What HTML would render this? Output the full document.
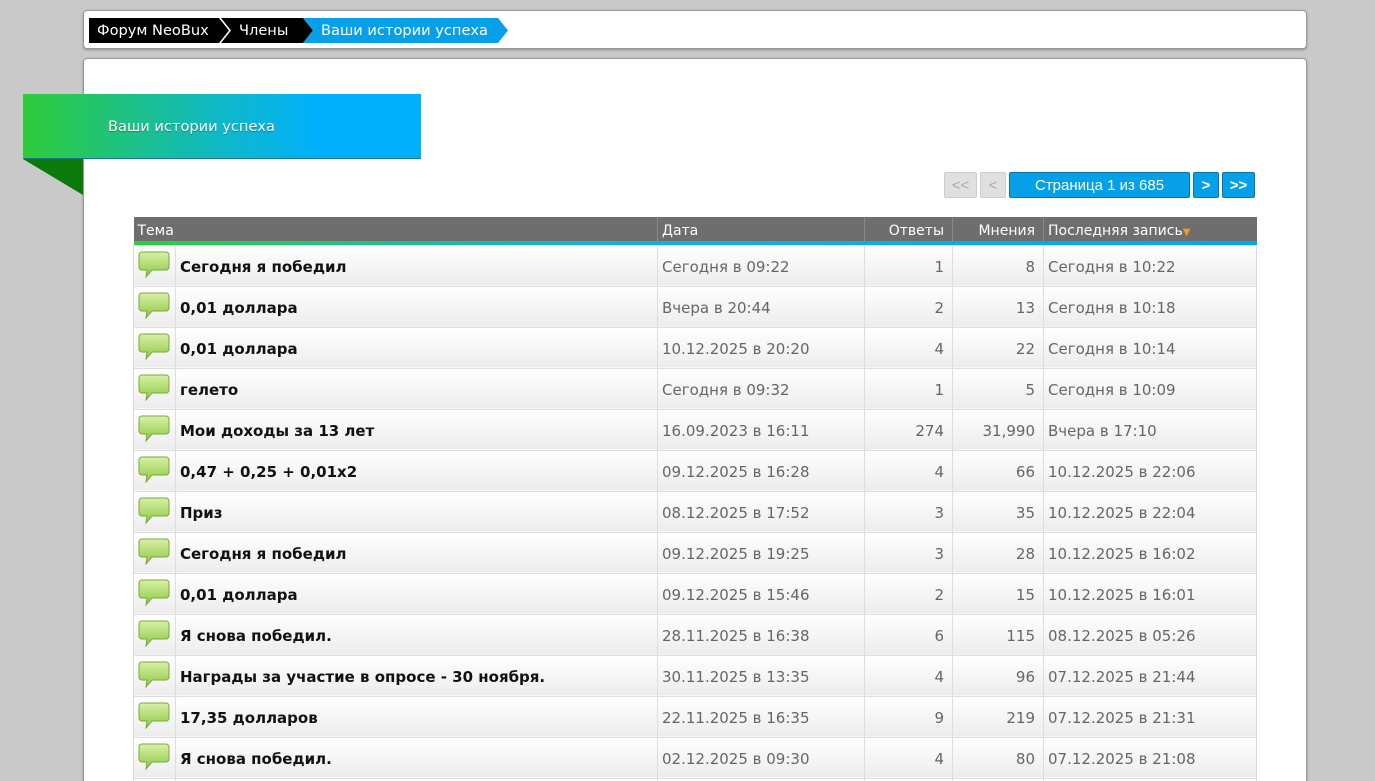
<!DOCTYPE html>
<html><head><meta charset="utf-8"><style>
*{box-sizing:border-box}
html,body{margin:0;width:1375px;height:781px;overflow:hidden}
body{background:#c9c9c9;font-family:"DejaVu Sans","Liberation Sans",sans-serif;position:relative}
.box{position:absolute;left:83px;width:1224px;background:#fff;border:1px solid #999;border-radius:4px;box-shadow:0 1px 2px rgba(0,0,0,.3)}
.bc{position:absolute;top:18px;height:25px;line-height:26px;font-size:14.6px;color:#fff}
.banner{position:absolute;left:23px;top:94px;width:398px;height:65px;background:linear-gradient(90deg,#2ecc38 0%,#0fb8c8 50%,#00b0fc 75%,#00b0fc);border-bottom:1px solid #1a7a8a;color:#fff;font-size:14.6px;line-height:66px;padding-left:85px;text-shadow:0 1px 1px rgba(0,0,0,.3)}
.fold{position:absolute;left:23px;top:159px;width:0;height:0;border-top:36px solid #0a7a0a;border-left:60px solid transparent}
.pg{position:absolute;top:172px;height:26px;border:1px solid #0a74b0;background:#06a0e8;color:#fff;font-size:15px;line-height:25px;text-align:center;border-radius:2px;font-family:"Liberation Sans",sans-serif}
.pg.d{background:#e0e0e0;border-color:#ccc;color:#aaa}
table{position:absolute;left:133px;top:217px;width:1123px;border-collapse:collapse;font-size:15px;table-layout:fixed}
th{background:#6e6e6e;color:#fff;font-weight:normal;height:24px;text-align:left;padding:4px 4px 0;border-left:1px solid #888;font-size:14px}
th.r{text-align:right;padding-right:8px}
tr.bar td{height:4px;padding:0;background:linear-gradient(90deg,#2ecc40,#1ab0d0 40%,#00a8f0);border:0}
td{height:41px;border:1px solid #ddd;background:linear-gradient(#fff,#ececec);color:#666;padding:3px 4px 0;white-space:nowrap;overflow:hidden}
td.t{font-weight:bold;color:#111}
td.n{text-align:right;padding-right:8px}
td.i{padding:0 0 0 4px}
</style></head><body>
<div class="box" style="top:10px;height:39px"></div>
<div class="bc" style="left:89px;width:140px;background:#000;padding-left:8px;clip-path:polygon(0 0,130px 0,140px 50%,130px 100%,0 100%)">Форум NeoBux</div>
<div class="bc" style="left:221px;width:92px;background:#000;padding-left:18px;clip-path:polygon(0 0,82px 0,92px 50%,82px 100%,0 100%,10px 50%)">Члены</div>
<div class="bc" style="left:303px;width:205px;background:#06a0e8;padding-left:18px;clip-path:polygon(0 0,195px 0,205px 50%,195px 100%,0 100%,10px 50%)">Ваши истории успеха</div>
<div class="box" style="top:58px;height:760px"></div>
<div class="fold"></div>
<div class="banner">Ваши истории успеха</div>
<div class="pg d" style="left:944px;width:33px">&lt;&lt;</div>
<div class="pg d" style="left:980px;width:26px">&lt;</div>
<div class="pg" style="left:1009px;width:181px">Страница 1 из 685</div>
<div class="pg" style="left:1193px;width:26px;font-weight:bold">&gt;</div>
<div class="pg" style="left:1222px;width:33px;font-weight:bold">&gt;&gt;</div>
<table>
<colgroup><col style="width:42px"><col style="width:482px"><col style="width:207px"><col style="width:88px"><col style="width:91px"><col style="width:213px"></colgroup>
<tr><th colspan="2" style="border-left:0">Тема</th><th>Дата</th><th class="r">Ответы</th><th class="r">Мнения</th><th>Последняя запись<span style="color:#f39a1e;font-size:10px">▼</span></th></tr>
<tr class="bar"><td colspan="6"></td></tr>
<tbody id="b"></tbody>
</table>
<script>
var rows=[["Сегодня я победил","Сегодня в 09:22",1,8,"Сегодня в 10:22"],["0,01 доллара","Вчера в 20:44",2,13,"Сегодня в 10:18"],["0,01 доллара","10.12.2025 в 20:20",4,22,"Сегодня в 10:14"],["гелето","Сегодня в 09:32",1,5,"Сегодня в 10:09"],["Мои доходы за 13 лет","16.09.2023 в 16:11",274,"31,990","Вчера в 17:10"],["0,47 + 0,25 + 0,01x2","09.12.2025 в 16:28",4,66,"10.12.2025 в 22:06"],["Приз","08.12.2025 в 17:52",3,35,"10.12.2025 в 22:04"],["Сегодня я победил","09.12.2025 в 19:25",3,28,"10.12.2025 в 16:02"],["0,01 доллара","09.12.2025 в 15:46",2,15,"10.12.2025 в 16:01"],["Я снова победил.","28.11.2025 в 16:38",6,115,"08.12.2025 в 05:26"],["Награды за участие в опросе - 30 ноября.","30.11.2025 в 13:35",4,96,"07.12.2025 в 21:44"],["17,35 долларов","22.11.2025 в 16:35",9,219,"07.12.2025 в 21:31"],["Я снова победил.","02.12.2025 в 09:30",4,80,"07.12.2025 в 21:08"],["","","","",""]];
var ic='<svg width="32" height="28" viewBox="0 0 32 28"><defs><linearGradient id="g" x1="0" y1="0" x2="0" y2="1"><stop offset="0" stop-color="#d8f0a8"/><stop offset="1" stop-color="#8cc840"/></linearGradient></defs><path d="M4 2h24a3 3 0 0 1 3 3v12a3 3 0 0 1-3 3H14l-6 7 1-7H4a3 3 0 0 1-3-3V5a3 3 0 0 1 3-3z" fill="url(#g)" stroke="#7aa83a"/></svg>';
var h='';rows.forEach(function(r){h+='<tr><td class="i">'+ic+'</td><td class="t">'+r[0]+'</td><td>'+r[1]+'</td><td class="n">'+r[2]+'</td><td class="n">'+r[3]+'</td><td>'+r[4]+'</td></tr>'});
document.getElementById('b').innerHTML=h;
</script>
</body></html>
